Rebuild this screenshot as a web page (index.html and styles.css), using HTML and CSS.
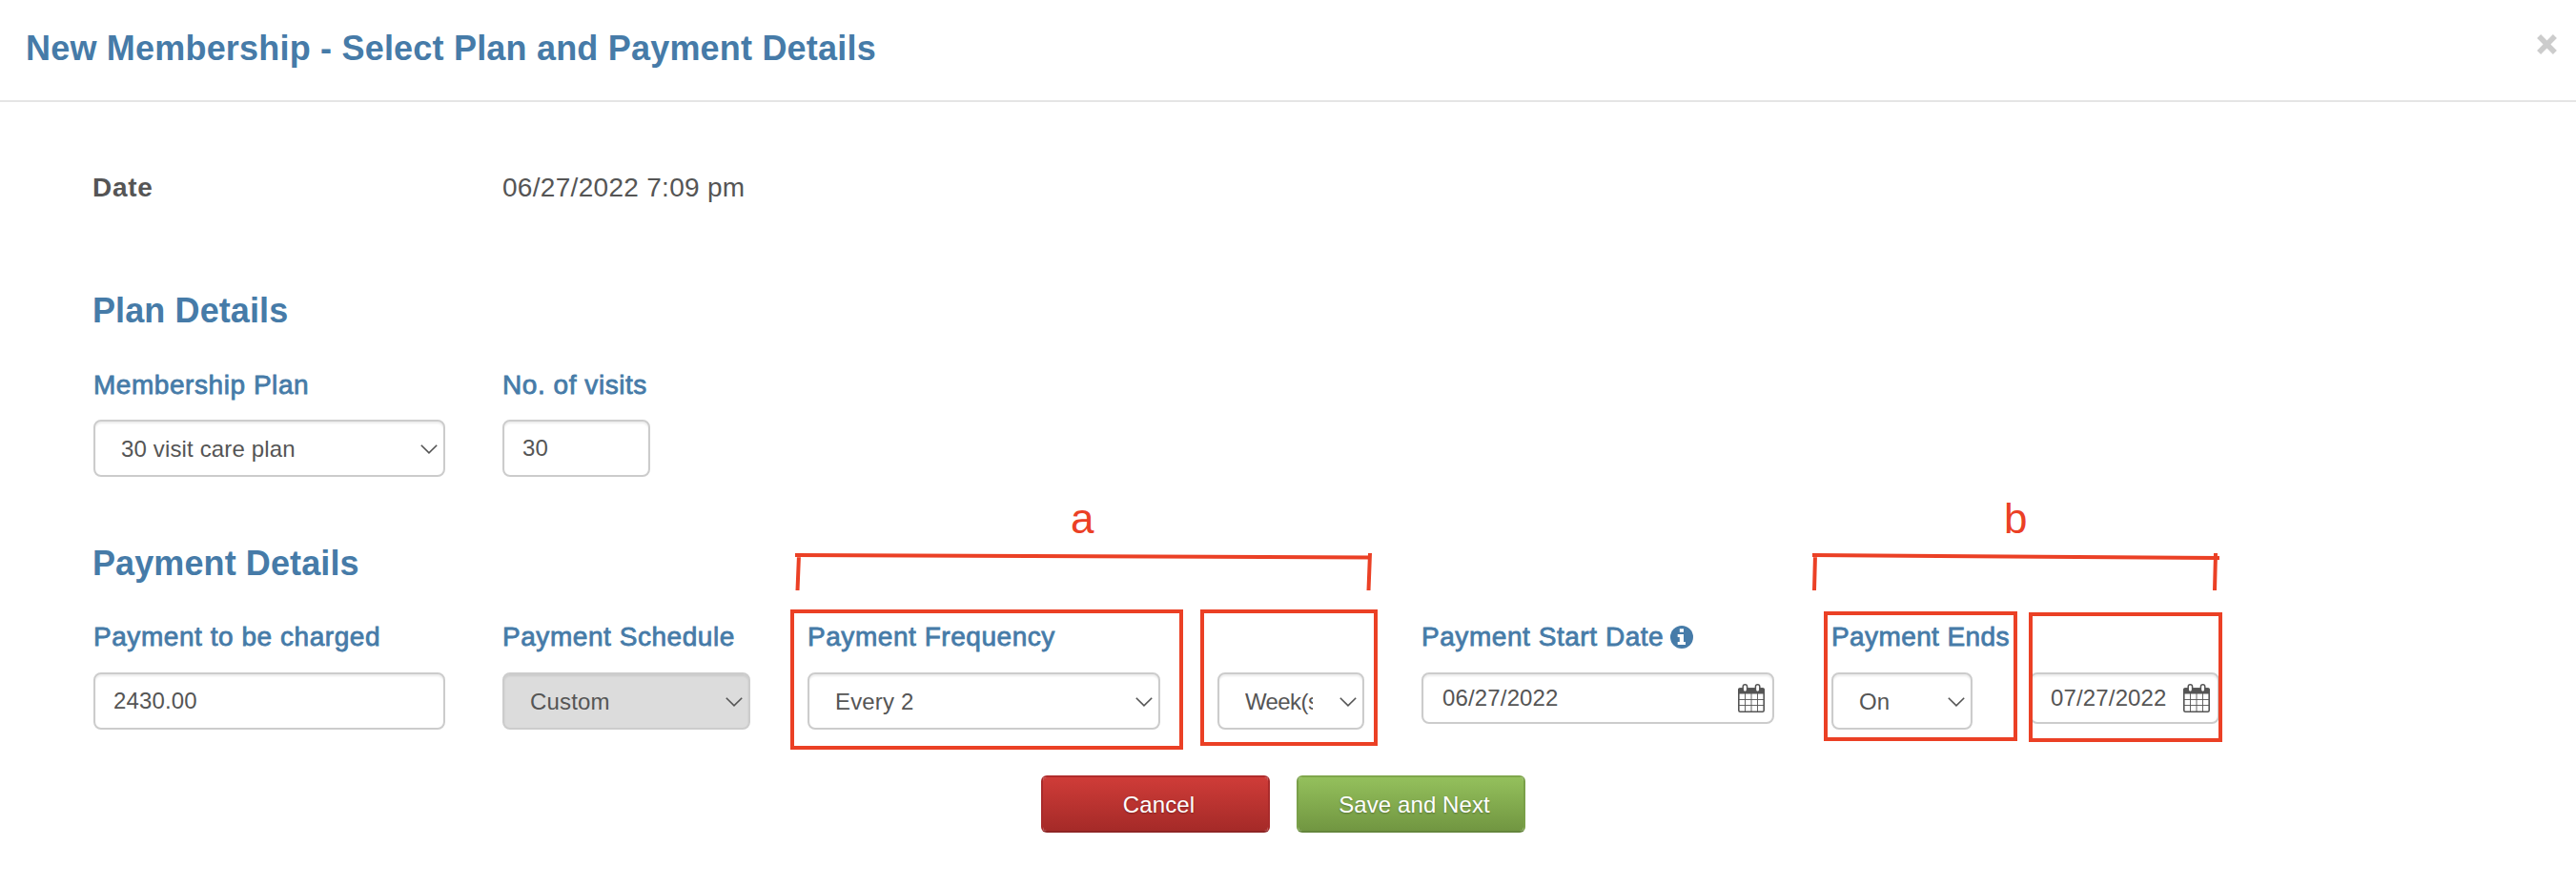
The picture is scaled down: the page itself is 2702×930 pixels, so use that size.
FILE: index.html
```html
<!DOCTYPE html>
<html lang="en">
<head>
    <meta charset="UTF-8">
    <meta name="viewport" content="width=device-width, initial-scale=1.0">
    <title>New Membership</title>
    <link rel="stylesheet" href="styles.css">
</head>
<body>

    <!-- Shared icons -->
    <svg class="icon-defs" width="0" height="0">
        <symbol id="chevron" viewBox="0 0 18 10">
            <path d="M0.8 0.8 L9 8.8 L17.2 0.8" fill="none" stroke="#555" stroke-width="1.6"/>
        </symbol>
        <symbol id="calendar" viewBox="0 0 28 30">
            <rect x="0.8" y="5" width="26.4" height="24.2" rx="1.5" fill="#fff" stroke="#555" stroke-width="1.6"/>
            <path fill="#555" d="M2 4.2H26Q28 4.2 28 6.2V10.4H0V6.2Q0 4.2 2 4.2Z"/>
            <path fill="none" stroke="#555" stroke-width="0.9" d="M7.5 10V29 M14 10V29 M20.5 10V29 M1 16.5H27 M1 22.5H27"/>
            <rect x="5.2" y="0.8" width="4.4" height="7.6" rx="2.2" fill="#fff" stroke="#555" stroke-width="1.5"/>
            <rect x="18.4" y="0.8" width="4.4" height="7.6" rx="2.2" fill="#fff" stroke="#555" stroke-width="1.5"/>
        </symbol>
    </svg>

    <div class="modal">
        <div class="modal-header">
            <h1>New Membership - Select Plan and Payment Details</h1>
            <button class="close" aria-label="Close">
                <svg width="21" height="21" viewBox="0 0 20 20"><path d="M2 2 L18 18 M18 2 L2 18" stroke="#ccc" stroke-width="5.4"/></svg>
            </button>
        </div>

        <div class="modal-body">
            <div class="date-row">
                <strong>Date</strong>
                <span>06/27/2022 7:09 pm</span>
            </div>

            <!-- Plan -->
            <h2>Plan Details</h2>
            <div class="row plan-row">
                <div class="field">
                    <label for="plan">Membership Plan</label>
                    <div class="select">
                        <select id="plan"><option>30 visit care plan</option></select>
                        <svg class="chevron"><use href="#chevron"/></svg>
                    </div>
                </div>
                <div class="field">
                    <label for="visits">No. of visits</label>
                    <input type="text" id="visits" value="30">
                </div>
            </div>

            <!-- Payment -->
            <h2>Payment Details</h2>
            <div class="row payment-row">
                <div class="field">
                    <label for="amount">Payment to be charged</label>
                    <input type="text" id="amount" value="2430.00">
                </div>
                <div class="field">
                    <label for="schedule">Payment Schedule</label>
                    <div class="select">
                        <select id="schedule" class="locked"><option>Custom</option></select>
                        <svg class="chevron"><use href="#chevron"/></svg>
                    </div>
                </div>
                <div class="field">
                    <label for="frequency">Payment Frequency</label>
                    <div class="select">
                        <select id="frequency"><option>Every 2</option></select>
                        <svg class="chevron"><use href="#chevron"/></svg>
                    </div>
                </div>
                <div class="field">
                    <label></label>
                    <div class="select">
                        <select class="unit"><option>Week(s)</option></select>
                        <svg class="chevron"><use href="#chevron"/></svg>
                    </div>
                </div>
                <div class="field">
                    <label for="start">Payment Start Date
                        <svg class="info" width="24" height="24" viewBox="0 0 24 24">
                            <circle cx="12" cy="12" r="12" fill="#467ba8"/>
                            <path fill="#fff" d="M9.8 3.2H14V6.8H9.8Z M7.7 9H14V17H16V20H7.7V17H9.8V12H7.7Z"/>
                        </svg>
                    </label>
                    <div class="date-input">
                        <input type="text" id="start" value="06/27/2022">
                        <svg class="calendar"><use href="#calendar"/></svg>
                    </div>
                </div>
                <div class="field ends">
                    <label for="ends">Payment Ends</label>
                    <div class="select">
                        <select id="ends"><option>On</option></select>
                        <svg class="chevron"><use href="#chevron"/></svg>
                    </div>
                </div>
                <div class="field">
                    <label></label>
                    <div class="date-input">
                        <input type="text" value="07/27/2022">
                        <svg class="calendar"><use href="#calendar"/></svg>
                    </div>
                </div>
            </div>

            <div class="actions">
                <button class="btn btn-cancel">Cancel</button>
                <button class="btn btn-save">Save and Next</button>
            </div>
        </div>

        <!-- Markup drawn over the form -->
        <svg class="notes" width="2702" height="930" viewBox="0 0 2702 930">
            <g class="note-lines">
                <path d="M834 582 L1438 584.5 M838 582 L836.5 619 M1437 580 L1435.5 619"/>
                <rect x="831" y="641" width="408" height="143"/>
                <rect x="1261" y="641" width="182" height="139"/>
                <path d="M1901 582 L2328 585 M1904 582 L1903 619 M2324 580 L2323 619"/>
                <rect x="1915" y="643" width="199" height="132"/>
                <rect x="2130" y="644" width="199" height="132"/>
            </g>
            <text class="note-text" x="1123" y="559">a</text>
            <text class="note-text" x="2102" y="559">b</text>
        </svg>
    </div>

</body>
</html>
```

FILE: styles.css
```css
* {
    box-sizing: border-box;
}
body {
    margin: 0;
    background-color: #fff;
    color: #555;
    font-family: 'Helvetica Neue', 'Liberation Sans', Arial, sans-serif;
    font-size: 28px;
}
.icon-defs {
    position: absolute;
}
.modal {
    position: relative;
    height: 930px;
    overflow: hidden;
}
.modal-header {
    display: flex;
    justify-content: space-between;
    align-items: flex-start;
    height: 107px;
    padding: 31px 20px 0 27px;
    border-bottom: 2px solid #e5e5e5;
}
h1, h2 {
    margin: 0;
    color: #467ba8;
    font-size: 36px;
    font-weight: bold;
    line-height: 40px;
    letter-spacing: 0.2px;
}
.close {
    display: flex;
    margin-top: 5px;
    padding: 0;
    border: none;
    background: none;
    cursor: pointer;
}
.modal-body {
    padding: 74px 0 0 98px;
}
.date-row {
    display: grid;
    grid-template-columns: 430px auto;
    margin-left: -1px;
    margin-bottom: 93px;
    line-height: 32px;
    letter-spacing: 0.3px;
}
.date-row strong {
    letter-spacing: 0.7px;
}
h2 {
    margin-left: -1px;
    letter-spacing: 0.1px;
}
.row {
    display: grid;
}
.plan-row {
    grid-template-columns: 369px 155px;
    column-gap: 60px;
    margin-top: 42px;
    margin-bottom: 71px;
}
.payment-row {
    grid-template-columns: 369px 260px 370px 154px 370px 148px 199px;
    column-gap: 60px;
    margin-top: 41px;
}
.field label {
    display: flex;
    align-items: center;
    height: 32px;
    margin: 0 0 20px;
    color: #467ba8;
    line-height: 32px;
    letter-spacing: 0.55px;
    white-space: nowrap;
    -webkit-text-stroke: 0.8px #467ba8;
}
.payment-row label {
    margin-bottom: 21px;
}
.field.ends label {
    letter-spacing: 0.4px;
}
.info {
    margin-left: 7px;
}
.select, .date-input {
    position: relative;
}
input, select {
    display: block;
    width: 100%;
    height: 60px;
    margin: 0;
    padding: 0 20px 0 19px;
    border: 2px solid #ccc;
    border-radius: 8px;
    background-color: #fff;
    box-shadow: inset 0 2px 2px rgba(0, 0, 0, 0.075);
    color: #555;
    font-family: inherit;
    font-size: 24px;
    letter-spacing: 0.15px;
    outline: none;
}
select {
    appearance: none;
    padding: 1px 50px 0 27px;
}
.unit {
    padding-right: 52px;
    letter-spacing: -0.6px;
}
.locked {
    background-color: #dcdcdc;
}
.chevron {
    position: absolute;
    top: 26px;
    right: 8px;
    width: 18px;
    height: 10px;
    pointer-events: none;
}
.date-input input {
    height: 54px;
    padding-left: 20px;
}
.calendar {
    position: absolute;
    top: 12px;
    right: 10px;
    width: 28px;
    height: 30px;
}
.actions {
    display: flex;
    gap: 28px;
    margin-top: 48px;
    margin-left: 994px;
}
.btn {
    width: 240px;
    height: 60px;
    padding: 1px 0 0 7px;
    border: 2px solid;
    border-radius: 6px;
    color: #fff;
    font-family: inherit;
    font-size: 24px;
    letter-spacing: 0.1px;
    text-shadow: 0 1px 2px rgba(0, 0, 0, 0.3);
    cursor: pointer;
}
.btn-cancel {
    border-color: #b02c2c #a92b2b #8e2525;
    background: linear-gradient(#cf3c38, #a52a28) padding-box;
}
.btn-save {
    border-color: #7fa64b #7aa049 #64853c;
    background: linear-gradient(#94c05c, #719641) padding-box;
}
.notes {
    position: absolute;
    top: 0;
    left: 0;
    pointer-events: none;
}
.note-lines {
    fill: none;
    stroke: #eb4025;
    stroke-width: 4;
}
.note-text {
    fill: #eb4025;
    font-size: 44px;
}
```
